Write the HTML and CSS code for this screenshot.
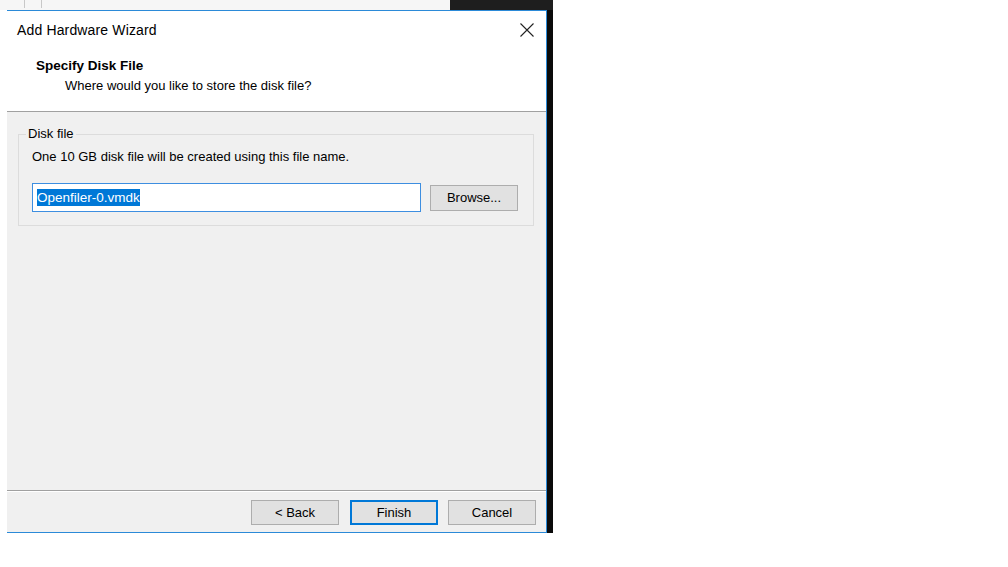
FILE: index.html
```html
<!DOCTYPE html>
<html lang="en">
<head>
    <meta charset="UTF-8">
    <meta name="viewport" content="width=device-width, initial-scale=1.0">
    <title>Add Hardware Wizard</title>
    <link rel="stylesheet" href="styles.css">
</head>
<body>
    <div class="screen">
        <!-- strip of the window behind, along the top -->
        <div class="backdrop">
            <div class="backdrop-light">
                <span class="tick"></span>
                <span class="tick"></span>
            </div>
            <div class="backdrop-dark"></div>
        </div>

        <div class="row">
            <div class="gutter"></div>

            <!-- Wizard dialog -->
            <div class="dialog">
                <div class="header">
                    <div class="titlebar">
                        <span class="title">Add Hardware Wizard</span>
                        <svg class="close" width="14" height="14" viewBox="0 0 14 14">
                            <path d="M0.5 0.5 L13.5 13.5 M13.5 0.5 L0.5 13.5" stroke="#222" stroke-width="1.1" fill="none"/>
                        </svg>
                    </div>
                    <div class="page-title">Specify Disk File</div>
                    <div class="page-subtitle">Where would you like to store the disk file?</div>
                </div>

                <div class="content">
                    <fieldset class="group">
                        <legend>Disk file</legend>
                        <p class="hint">One 10 GB disk file will be created using this file name.</p>
                        <div class="file-row">
                            <div class="textbox"><span class="selected">Openfiler-0.vmdk</span></div>
                            <button class="btn browse">Browse...</button>
                        </div>
                    </fieldset>
                </div>

                <div class="footer">
                    <button class="btn back">&lt; Back</button>
                    <button class="btn default">Finish</button>
                    <button class="btn">Cancel</button>
                </div>
            </div>

            <div class="shadow-edge"></div>
        </div>
    </div>
</body>
</html>
```

FILE: styles.css
```css
/* Page reset */
body {
    margin: 0;
    background: #ffffff;
    font-family: "Liberation Sans", Arial, sans-serif;
    font-size: 13px;
    color: #000;
}

/* Area holding the dialog and the pieces of the desktop around it */
.screen {
    width: 553px;
}

.backdrop {
    display: flex;
    height: 10px;
}

.backdrop-light {
    width: 450px;
    background: #f6f6f6;
    display: flex;
    align-items: flex-start;
    padding-left: 24px;
    gap: 16px;
    box-sizing: border-box;
}

.tick {
    width: 1px;
    height: 8px;
    background: #c8c8c8;
}

.backdrop-dark {
    flex: 1;
    background: #1e1e1e;
}

.row {
    display: flex;
}

.gutter {
    width: 7px;
    background: #ffffff;
}

.shadow-edge {
    width: 6px;
    background: #0a0a0a;
}

/* Dialog window */
.dialog {
    width: 540px;
    height: 523px;
    box-sizing: border-box;
    border-top: 1px solid #2b8ad8;
    border-right: 1px solid #2b8ad8;
    border-bottom: 1px solid #2b8ad8;
    display: flex;
    flex-direction: column;
    background: #f0f0f0;
}

.header {
    background: #ffffff;
    height: 100px;
    border-bottom: 1px solid #a0a0a0;
    flex-shrink: 0;
}

.titlebar {
    height: 38px;
    display: flex;
    align-items: center;
    justify-content: space-between;
    padding: 0 12px 0 10px;
}

.title {
    font-size: 14px;
    letter-spacing: 0.15px;
}

.close {
    display: block;
}

.page-title {
    font-weight: bold;
    font-size: 13.5px;
    line-height: 16px;
    padding-left: 29px;
    margin-top: 9px;
}

.page-subtitle {
    line-height: 16px;
    padding-left: 58px;
    margin-top: 4px;
}

/* Main area with the group box */
.content {
    flex: 1;
    padding: 14px 12px 0 11px;
}

.group {
    margin: 0;
    border: 1px solid #dcdcdc;
    padding: 7px 13px 13px 13px;
}

.group legend {
    padding: 0 2px;
    margin-left: -6px;
    line-height: 16px;
}

.hint {
    margin: 0;
    line-height: 16px;
}

.file-row {
    display: flex;
    align-items: center;
    margin-top: 18px;
}

.textbox {
    width: 389px;
    height: 29px;
    box-sizing: border-box;
    border: 1px solid #3d8ee0;
    background: #ffffff;
    display: flex;
    align-items: center;
    padding-left: 4px;
}

.selected {
    background: #0078d7;
    color: #ffffff;
    line-height: 17px;
    font-size: 13.5px;
}

/* Push buttons */
.btn {
    font-family: inherit;
    font-size: 13px;
    width: 88px;
    height: 25px;
    background: #e1e1e1;
    border: 1px solid #adadad;
    padding: 0;
    color: #000;
}

.btn.default {
    border: 1px solid #0078d7;
    outline: 1px solid #0078d7;
    outline-offset: -2px;
}

.btn.back {
    margin-right: 1px;
}

.browse {
    margin-left: 9px;
    height: 26px;
}

.footer {
    height: 42px;
    box-sizing: border-box;
    flex-shrink: 0;
    border-top: 1px solid #a0a0a0;
    box-shadow: inset 0 1px 0 #ffffff;
    display: flex;
    justify-content: flex-end;
    align-items: flex-start;
    padding: 9px 10px 0 0;
    gap: 10px;
}
```
